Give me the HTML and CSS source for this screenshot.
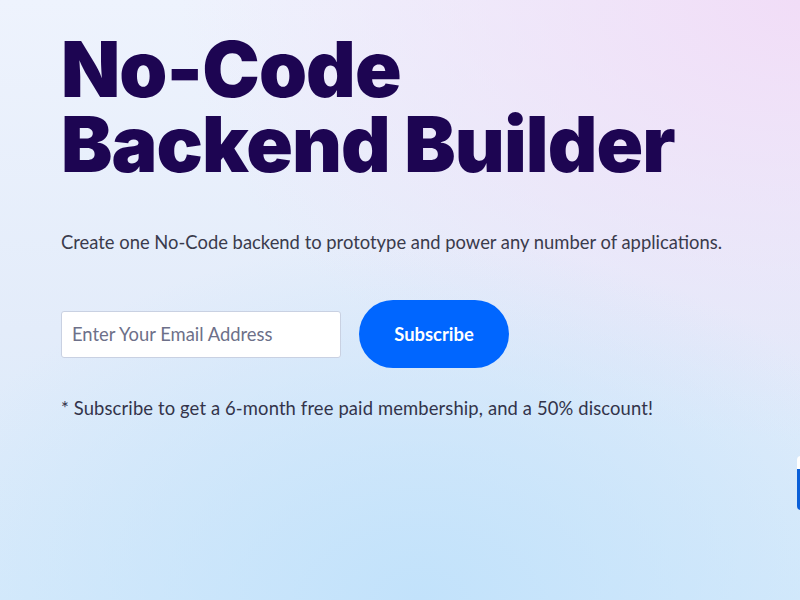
FILE: index.html
```html
<!DOCTYPE html>
<html lang="en">
<head>
<meta charset="utf-8">
<title>No-Code Backend Builder</title>
<link rel="stylesheet" href="styles.css">
</head>
<body>
<main class="hero">
  <h1 class="title">No-Code<br>Backend Builder</h1>
  <p class="lead">Create one No-Code backend to prototype and power any number of applications.</p>
  <form class="signup">
    <input class="email" type="email" placeholder="Enter Your Email Address">
    <button class="btn" type="button">Subscribe</button>
  </form>
  <p class="note">* Subscribe to get a 6-month free paid membership, and a 50% discount!</p>
</main>
<div class="edge-card"></div>
</body>
</html>
```
FILE: styles.css
```css
html, body {
  margin: 0;
  padding: 0;
  height: 100%;
  overflow: hidden;
}
body {
  position: relative;
  width: 800px;
  height: 600px;
  font-family: "Lato", "Open Sans", sans-serif;
  background:
    radial-gradient(ellipse 520px 360px at 420px 600px, #c2e2fb 0%, rgba(194,226,251,0) 100%),
    radial-gradient(ellipse 620px 440px at 800px 0px, #f1ddf7 0%, rgba(241,221,247,0) 100%),
    linear-gradient(180deg, #eef3fd 0%, #e3ecfa 55%, #d6eafb 100%);
}
.hero {
  padding: 32px 0 0 61px;
}
.title {
  margin: 0;
  font-family: "Inter", sans-serif;
  font-weight: 900;
  font-size: 77px;
  line-height: 75px;
  letter-spacing: -0.9px;
  color: #1d0552;
}
.lead {
  margin: 48px 0 0 0;
  font-size: 18.4px;
  line-height: 24px;
  color: #3a3b4c;
}
.signup {
  display: flex;
  align-items: center;
  gap: 18px;
  margin-top: 46px;
}
.email {
  box-sizing: border-box;
  width: 280px;
  height: 47px;
  padding: 0 10px;
  border: 1px solid #c9d1e2;
  border-radius: 3px;
  background: #fff;
  font-family: inherit;
  font-size: 18.4px;
  color: #333;
  outline: none;
}
.email::placeholder {
  color: #6d7089;
}
.btn {
  width: 150px;
  height: 68px;
  border: none;
  border-radius: 34px;
  background: #0066ff;
  color: #fff;
  font-family: inherit;
  font-weight: 700;
  font-size: 18.4px;
}
.note {
  margin: 28px 0 0 0;
  font-size: 18.4px;
  letter-spacing: 0.13px;
  line-height: 24px;
  color: #33344a;
}
.edge-card {
  position: absolute;
  left: 797px;
  top: 456px;
  width: 20px;
  height: 54px;
  border-radius: 4px 0 0 4px;
  background: linear-gradient(180deg, #ffffff 0, #ffffff 13px, #0a5fd8 13px, #0a5fd8 100%);
}
```
